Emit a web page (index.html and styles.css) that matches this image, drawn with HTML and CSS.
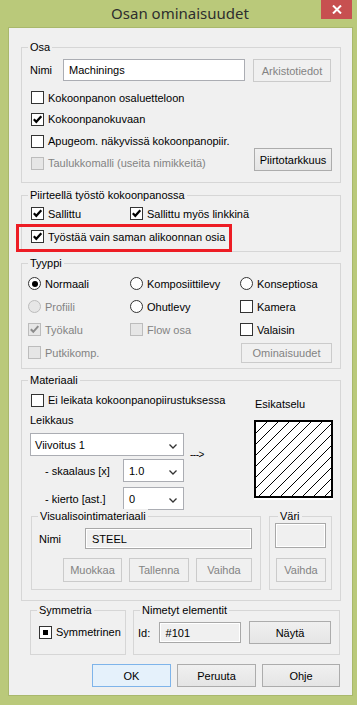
FILE: index.html
```html
<!DOCTYPE html>
<html>
<head>
  <meta charset="UTF-8"/>
  <title>Osan ominaisuudet</title>
  <link rel="stylesheet" href="styles.css">
</head>
<body>
  <div class="titlebar">
    <span class="title">Osan ominaisuudet</span>
    <span class="close">
      <svg width="10" height="9" viewBox="0 0 10 9"><path d="M1 0.5 L9 8.5 M9 0.5 L1 8.5" stroke="#fff" stroke-width="2"/></svg>
    </span>
  </div>

  <div class="client">

    <!-- Osa -->
    <div class="group osa">
      <div class="legend">Osa</div>
      <div class="nameRow">
        <span class="lblNimi">Nimi</span>
        <span class="input nameInput">Machinings</span>
        <span class="btn disabled">Arkistotiedot</span>
      </div>
      <div class="osaLower">
        <div class="checks">
          <div class="check r21"><span class="box"></span>Kokoonpanon osaluetteloon</div>
          <div class="check r22"><span class="box on"><svg width="11" height="11" viewBox="0 0 11 11"><path d="M1.8 5.2 L4.3 7.8 L9.3 2.2" fill="none" stroke="#000" stroke-width="2.2"/></svg></span>Kokoonpanokuvaan</div>
          <div class="check r22"><span class="box"></span>Apugeom. näkyvissä kokoonpanopiir.</div>
          <div class="check r22 off"><span class="box"></span>Taulukkomalli (useita nimikkeitä)</div>
        </div>
        <span class="btn piirto">Piirtotarkkuus</span>
      </div>
    </div>

    <!-- Piirteellä työstö -->
    <div class="group piirre">
      <div class="legend">Piirteellä työstö kokoonpanossa</div>
      <div class="piirreRow1">
        <div class="check sallittu"><span class="box on"><svg width="11" height="11" viewBox="0 0 11 11"><path d="M1.8 5.2 L4.3 7.8 L9.3 2.2" fill="none" stroke="#000" stroke-width="2.2"/></svg></span>Sallittu</div>
        <div class="check"><span class="box on"><svg width="11" height="11" viewBox="0 0 11 11"><path d="M1.8 5.2 L4.3 7.8 L9.3 2.2" fill="none" stroke="#000" stroke-width="2.2"/></svg></span>Sallittu myös linkkinä</div>
      </div>
      <div class="check piirreRow2"><span class="box on"><svg width="11" height="11" viewBox="0 0 11 11"><path d="M1.8 5.2 L4.3 7.8 L9.3 2.2" fill="none" stroke="#000" stroke-width="2.2"/></svg></span>Työstää vain saman alikoonnan osia</div>
      <div class="highlight"></div>
    </div>

    <!-- Tyyppi -->
    <div class="group tyyppi">
      <div class="legend">Tyyppi</div>
      <div class="typeGrid">
        <div class="check"><span class="radio sel"></span>Normaali</div>
        <div class="check"><span class="radio"></span>Komposiittilevy</div>
        <div class="check"><span class="radio"></span>Konseptiosa</div>

        <div class="check off"><span class="radio"></span>Profiili</div>
        <div class="check"><span class="radio"></span>Ohutlevy</div>
        <div class="check"><span class="box"></span>Kamera</div>

        <div class="check off"><span class="box"><svg width="11" height="11" viewBox="0 0 11 11"><path d="M1.8 5.2 L4.3 7.8 L9.3 2.2" fill="none" stroke="#8c8c8c" stroke-width="2"/></svg></span>Työkalu</div>
        <div class="check off"><span class="box"></span>Flow osa</div>
        <div class="check"><span class="box"></span>Valaisin</div>

        <div class="check off"><span class="box"></span>Putkikomp.</div>
        <div></div>
        <div class="check"><span class="btn disabled small">Ominaisuudet</span></div>
      </div>
    </div>

    <!-- Materiaali -->
    <div class="group materiaali">
      <div class="legend">Materiaali</div>
      <div class="matTop">
        <div class="matLeft">
          <div class="check eiLeikata"><span class="box"></span>Ei leikata kokoonpanopiirustuksessa</div>
          <div class="leikkaus">Leikkaus</div>
          <div class="select wide">Viivoitus 1<svg class="chev" width="8" height="5" viewBox="0 0 8 5"><path d="M0.5 0.5 L4 4 L7.5 0.5" fill="none" stroke="#333" stroke-width="1.3"/></svg></div>
          <div class="selRow skaalaus">
            <span class="selLabel">- skaalaus [x]</span>
            <div class="select narrow">1.0<svg class="chev" width="8" height="5" viewBox="0 0 8 5"><path d="M0.5 0.5 L4 4 L7.5 0.5" fill="none" stroke="#333" stroke-width="1.3"/></svg></div>
          </div>
          <div class="selRow kierto">
            <span class="selLabel">- kierto [ast.]</span>
            <div class="select narrow">0<svg class="chev" width="8" height="5" viewBox="0 0 8 5"><path d="M0.5 0.5 L4 4 L7.5 0.5" fill="none" stroke="#333" stroke-width="1.3"/></svg></div>
          </div>
        </div>
        <div class="arrow">---&gt;</div>
        <div class="matRight">
          <div class="esikatselu">Esikatselu</div>
          <div class="preview">
            <svg width="75" height="74" viewBox="0 0 75 74" shape-rendering="crispEdges">
              <g stroke="#000" stroke-width="1">
                <line x1="0" y1="11" x2="11" y2="0"/>
                <line x1="0" y1="22" x2="22" y2="0"/>
                <line x1="0" y1="33" x2="33" y2="0"/>
                <line x1="0" y1="44" x2="44" y2="0"/>
                <line x1="0" y1="55" x2="55" y2="0"/>
                <line x1="0" y1="66" x2="66" y2="0"/>
                <line x1="0" y1="77" x2="77" y2="0"/>
                <line x1="0" y1="88" x2="88" y2="0"/>
                <line x1="0" y1="99" x2="99" y2="0"/>
                <line x1="0" y1="110" x2="110" y2="0"/>
                <line x1="0" y1="121" x2="121" y2="0"/>
                <line x1="0" y1="132" x2="132" y2="0"/>
                <line x1="0" y1="143" x2="143" y2="0"/>
              </g>
            </svg>
          </div>
        </div>
      </div>
      <div class="matBottom">
        <div class="group sub visu">
          <div class="legend">Visualisointimateriaali</div>
          <div class="visuName">
            <span class="lblVisu">Nimi</span>
            <span class="input readonly steel">STEEL</span>
          </div>
          <div class="btnRow">
            <span class="btn disabled muokkaa">Muokkaa</span>
            <span class="btn disabled tallenna">Tallenna</span>
            <span class="btn disabled vaihda">Vaihda</span>
          </div>
        </div>
        <div class="group sub vari">
          <div class="legend">Väri</div>
          <div class="colorBox"></div>
          <span class="btn disabled variBtn">Vaihda</span>
        </div>
      </div>
    </div>

    <!-- Symmetria / Nimetyt elementit -->
    <div class="bottomGroups">
      <div class="group symm">
        <div class="legend">Symmetria</div>
        <div class="check symmCheck"><span class="box mixed"><span class="dot"></span></span>Symmetrinen</div>
      </div>
      <div class="group nimetyt">
        <div class="legend">Nimetyt elementit</div>
        <div class="idRow">
          <span class="lblId">Id:</span>
          <span class="input readonly idInput">#101</span>
          <span class="btn nayta">Näytä</span>
        </div>
      </div>
    </div>

    <div class="dialogButtons">
      <span class="btn dlg default">OK</span>
      <span class="btn dlg">Peruuta</span>
      <span class="btn dlg ohje">Ohje</span>
    </div>

  </div>
</body>
</html>
```

FILE: styles.css
```css
body {
  margin: 0;
  width: 357px;
  height: 705px;
  overflow: hidden;
  background: #bac97a;
  font-family: "Liberation Sans", Arial, sans-serif;
  font-size: 11px;
  color: #000;
}

.titlebar {
  position: relative;
  height: 28px;
  display: flex;
  justify-content: center;
}
.title {
  font-family: "Noto Sans", "Open Sans", sans-serif;
  font-size: 15px;
  line-height: 27px;
  color: #2e2e2e;
  padding-left: 3px;
}
.close {
  position: absolute;
  right: 5px;
  top: 0;
  width: 31px;
  height: 19px;
  background: #c75050;
  display: flex;
  align-items: center;
  justify-content: center;
}

.client {
  margin-left: 9px;
  width: 343px;
  height: 667px;
  box-sizing: border-box;
  padding: 19px 11px 0 12px;
  background: #f0f0f0;
  box-shadow: 0 0 0 1px #a9b86c;
}

/* group boxes */
.group {
  position: relative;
  border: 1px solid #d6d6d6;
  box-sizing: border-box;
  padding: 0 8px;
}
.legend {
  width: fit-content;
  margin: -8px 0 0 6px;
  padding: 0 2px;
  line-height: 14px;
  background: #f0f0f0;
  position: relative;
  left: -8px;
}

/* check boxes and radios */
.check {
  display: flex;
  align-items: center;
  white-space: nowrap;
}
.box {
  width: 13px;
  height: 13px;
  box-sizing: border-box;
  border: 1px solid #333;
  background: #fff;
  margin-right: 4px;
  display: flex;
  align-items: center;
  justify-content: center;
  flex: none;
}
.radio {
  width: 13px;
  height: 13px;
  box-sizing: border-box;
  border: 1px solid #333;
  border-radius: 50%;
  background: #fff;
  margin-right: 4px;
  flex: none;
  display: flex;
  align-items: center;
  justify-content: center;
}
.radio.sel::after {
  content: "";
  width: 6px;
  height: 6px;
  border-radius: 50%;
  background: #000;
}
.check.off {
  color: #838383;
}
.check.off .box,
.check.off .radio {
  border-color: #bcbcbc;
  background: #e6e6e6;
}
.box.mixed .dot {
  width: 5px;
  height: 5px;
  background: #000;
}

/* inputs, buttons */
.input {
  box-sizing: border-box;
  border: 1px solid #abadb3;
  background: #fff;
  padding-left: 5px;
  display: flex;
  align-items: center;
}
.input.readonly {
  background: #f0f0f0;
  border-color: #a8a8a8;
  box-shadow: inset 0 0 0 1px #fff;
}
.btn {
  box-sizing: border-box;
  height: 23px;
  border: 1px solid #acacac;
  background: linear-gradient(#f0f0f0, #e5e5e5);
  display: flex;
  align-items: center;
  justify-content: center;
  flex: none;
}
.btn.disabled {
  color: #838383;
  border-color: #cbcbcb;
  background: #f0f0f0;
}
.btn.default {
  background: #e5f1fb;
  border-color: #7eb4ea;
}

/* Osa */
.osa {
  height: 136px;
}
.nameRow {
  display: flex;
  align-items: flex-start;
  margin-top: 5px;
  height: 23px;
}
.lblNimi {
  width: 33px;
  line-height: 22px;
}
.nameInput {
  width: 182px;
  height: 22px;
  margin-right: 8px;
  padding-left: 5px;
}
.nameRow .btn {
  width: 78px;
}
.osaLower {
  display: flex;
  justify-content: space-between;
  margin-top: 5px;
}
.checks {
  margin-left: 1px;
}
.r21 { height: 21px; }
.r22 { height: 22px; }
.piirto {
  width: 78px;
  align-self: flex-end;
  margin-bottom: 3px;
}

/* Piirteellä */
.piirre {
  margin-top: 12px;
  height: 57px;
}
.piirreRow1 {
  display: flex;
  height: 21px;
  margin-top: 1px;
  margin-left: 1px;
}
.sallittu {
  width: 99px;
}
.piirreRow2 {
  height: 25px;
  margin-left: 1px;
}
.highlight {
  position: absolute;
  left: -6px;
  top: 28px;
  width: 216px;
  height: 28px;
  box-sizing: border-box;
  border: 3px solid #ed1c24;
}

/* Tyyppi */
.tyyppi {
  margin-top: 11px;
  height: 106px;
  padding-left: 6px;
}
.tyyppi .legend {
  margin-left: 8px;
}
.typeGrid {
  display: grid;
  grid-template-columns: 102px 110px 1fr;
  grid-auto-rows: 23px;
  margin-top: 2px;
}
.btn.small {
  width: 91px;
  height: 20px;
  margin-left: 1px;
}

/* Materiaali */
.materiaali {
  margin-top: 11px;
  height: 221px;
}
.matTop {
  display: flex;
  margin-top: 2px;
}
.matLeft {
  width: 154px;
  flex: none;
}
.eiLeikata {
  height: 22px;
  margin-left: 1px;
}
.leikkaus {
  height: 19px;
  line-height: 19px;
}
.select {
  position: relative;
  box-sizing: border-box;
  height: 23px;
  border: 1px solid #abadb3;
  background: #fff;
  display: flex;
  align-items: center;
  padding-left: 4px;
}
.select.wide {
  margin-top: 3px;
}
.select.narrow {
  width: 61px;
  padding-left: 5px;
}
.chev {
  position: absolute;
  right: 6px;
  top: 10px;
}
.selRow {
  display: flex;
  align-items: center;
}
.skaalaus { margin-top: 3px; }
.kierto { margin-top: 5px; }
.selLabel {
  width: 78px;
  padding-left: 15px;
}
.arrow {
  width: 70px;
  flex: none;
  box-sizing: border-box;
  padding-left: 6px;
  margin-top: 59px;
  line-height: 14px;
  height: 14px;
  font-size: 10px;
  letter-spacing: -0.5px;
}
.matRight {
  width: 79px;
  flex: none;
}
.esikatselu {
  margin-top: 8px;
  line-height: 14px;
  padding-left: 1px;
}
.preview {
  margin-top: 9px;
  width: 79px;
  height: 78px;
  box-sizing: border-box;
  border: 2px solid #000;
  background: #fff;
  box-shadow: 0 2px 0 #fff;
  overflow: hidden;
}
.preview svg {
  display: block;
}
.matBottom {
  display: flex;
  margin-top: 6px;
  margin-left: 1px;
}
.group.sub {
  height: 74px;
}
.visu {
  width: 231px;
  padding: 0 8px 0 7px;
}
.visu .legend {
  margin-left: 7px;
}
.visuName {
  display: flex;
  margin-top: 5px;
  align-items: center;
}
.lblVisu {
  width: 46px;
}
.steel {
  width: 167px;
  height: 21px;
  padding-left: 6px;
}
.btnRow {
  display: flex;
  justify-content: flex-end;
  gap: 7px;
  margin-top: 9px;
}
.btnRow .btn {
  height: 24px;
}
.muokkaa { width: 59px; }
.tallenna { width: 60px; }
.vaihda { width: 56px; }
.vari {
  width: 64px;
  margin-left: 8px;
  padding: 0 0 0 5px;
}
.vari .legend {
  margin-left: 11px;
}
.colorBox {
  width: 51px;
  height: 25px;
  box-sizing: border-box;
  border: 1px solid #a8a8a8;
  box-shadow: inset 0 0 0 1px #fff;
  background: #f0f0f0;
}
.variBtn {
  width: 50px;
  height: 24px;
  margin-top: 10px;
  margin-left: 1px;
}

/* bottom */
.bottomGroups {
  display: flex;
  margin: 9px 0 0 9px;
}
.symm {
  width: 96px;
  height: 45px;
}
.symmCheck {
  margin-top: 4px;
  height: 22px;
}
.nimetyt {
  width: 207px;
  height: 45px;
  margin-left: 7px;
  padding-left: 4px;
}
.nimetyt .legend {
  margin-left: 10px;
}
.idRow {
  display: flex;
  align-items: center;
  margin-top: 4px;
  height: 23px;
}
.lblId {
  width: 21px;
}
.idInput {
  width: 84px;
  height: 21px;
  margin-right: 8px;
  padding-left: 6px;
}
.nayta {
  width: 82px;
}
.dialogButtons {
  display: flex;
  justify-content: flex-end;
  gap: 6px;
  margin: 9px 1px 0 0;
}
.btn.dlg {
  width: 79px;
}
.btn.ohje {
  width: 78px;
}
```
